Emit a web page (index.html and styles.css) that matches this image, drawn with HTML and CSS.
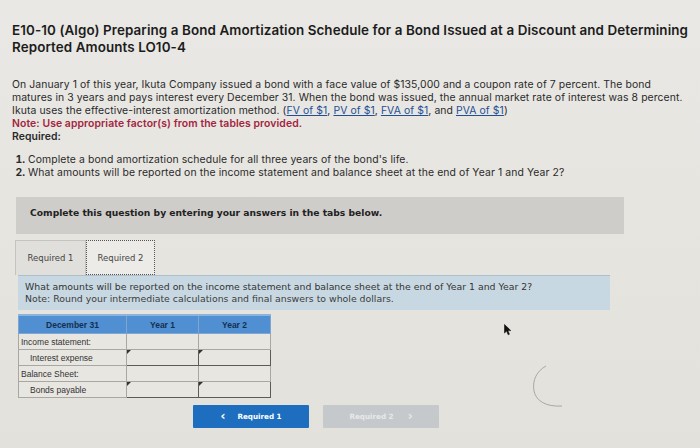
FILE: index.html
```html
<!DOCTYPE html>
<html>
<head>
<meta charset="utf-8">
<link rel="stylesheet" href="styles.css">
</head>
<body>
<div class="page">
  <h1 class="title">E10-10 (Algo) Preparing a Bond Amortization Schedule for a Bond Issued at a Discount and Determining<br>Reported Amounts LO10-4</h1>
  <p class="intro">On January 1 of this year, Ikuta Company issued a bond with a face value of $135,000 and a coupon rate of 7 percent. The bond<br>matures in 3 years and pays interest every December 31. When the bond was issued, the annual market rate of interest was 8 percent.<br>Ikuta uses the effective-interest amortization method. (<a>FV of $1</a>, <a>PV of $1</a>, <a>FVA of $1</a>, and <a>PVA of $1</a>)<br><span class="note">Note: Use appropriate factor(s) from the tables provided.</span><br><span class="req">Required:</span></p>
  <ol class="list">
    <li>Complete a bond amortization schedule for all three years of the bond's life.</li>
    <li>What amounts will be reported on the income statement and balance sheet at the end of Year 1 and Year 2?</li>
  </ol>
  <div class="banner">Complete this question by entering your answers in the tabs below.</div>
  <div class="tabs">
    <div class="tab">Required 1</div>
    <div class="tab active">Required 2</div>
  </div>
  <div class="panel">What amounts will be reported on the income statement and balance sheet at the end of Year 1 and Year 2?<br><span>Note: Round your intermediate calculations and final answers to whole dollars.</span></div>
  <table class="grid">
    <tr><th>December 31</th><th>Year 1</th><th>Year 2</th></tr>
    <tr><td class="lbl">Income statement:</td><td></td><td></td></tr>
    <tr><td class="lbl ind">Interest expense</td><td class="inp"></td><td class="inp"></td></tr>
    <tr><td class="lbl">Balance Sheet:</td><td></td><td></td></tr>
    <tr><td class="lbl ind">Bonds payable</td><td class="inp"></td><td class="inp"></td></tr>
  </table>
  <div class="navs">
    <div class="btn prev"><span class="chev">&lsaquo;</span>Required 1</div>
    <div class="btn next">Required 2<span class="chev r">&rsaquo;</span></div>
  </div>
  <svg class="cursor" width="8" height="12" viewBox="0 0 8 12"><path d="M0.5 0.5 L0.5 9 L2.6 7 L4.2 10.8 L5.4 10.2 L3.9 6.6 L6.8 6.6 Z" fill="#111" stroke="#111" stroke-width="0.6"/></svg>
  <svg class="scribble" width="40" height="46" viewBox="0 0 40 46"><path d="M16 2 C 7 7, 2 16, 4 27 C 6 37, 16 43, 32 42" fill="none" stroke="#9a9894" stroke-width="0.8"/></svg>
</div>
</body>
</html>
```
FILE: styles.css
```css
html, body { margin: 0; padding: 0; }
body {
  width: 700px; height: 448px; overflow: hidden;
  background: linear-gradient(180deg, #e9e8e4 0%, #e6e4df 60%, #e3e1dc 100%);
}
.page { position: relative; padding: 22px 0 0 12px; height: 448px; box-sizing: border-box; }
.title {
  margin: 0; font-family: Inter, sans-serif; font-weight: 600;
  font-size: 13.4px; line-height: 17px; color: #1c1c1c; letter-spacing: 0.1px;
}
.intro {
  margin: 22px 0 0 0; font-family: Inter, sans-serif; font-size: 10.4px;
  line-height: 13px; color: #2a2a2a; letter-spacing: 0.09px;
}
.intro a { color: #1f4f96; text-decoration: underline; }
.note { color: #a3253e; font-weight: 600; }
.req { font-weight: 600; color: #2a2a2a; }
.list {
  margin: 10px 0 0 0; padding-left: 16px; font-family: Inter, sans-serif;
  font-size: 10.4px; line-height: 13px; color: #2a2a2a; letter-spacing: 0.1px;
}
.list li::marker { font-weight: 700; }
.banner {
  margin: 18px 0 0 4px; width: 608px; height: 37px; box-sizing: border-box;
  background: #cfcdca; padding: 10px 0 0 14px;
  font-family: "DejaVu Sans", sans-serif; font-weight: 700; font-size: 9.2px; color: #222;
}
.tabs { display: flex; margin: 6px 0 0 3px; height: 35px; }
.tab {
  width: 71px; box-sizing: border-box; border: 1px solid #c4c3bf; border-bottom: none;
  background: #e0dfdb; font-family: "DejaVu Sans", sans-serif; font-size: 8.5px;
  color: #444; display: flex; align-items: center; justify-content: center;
}
.tab.active {
  width: 69px; background: #ecebe7; border: 1px dotted #555;
}
.panel {
  margin: 0 0 0 6px; width: 592px; height: 35px; box-sizing: border-box;
  background: #c8d8e2; border-top: 1px solid #aebfcb; padding: 5px 0 0 7px;
  font-family: "DejaVu Sans", sans-serif; font-size: 9.36px; line-height: 12px; color: #333;
}
.panel span { color: #3c3c3c; }
.grid {
  margin: 4px 0 0 6px; border-collapse: collapse; font-family: "Liberation Sans", Arial, sans-serif;
  font-size: 8.5px; color: #333;
}
.grid th {
  background: #4f8fd2; color: #15304f; font-weight: 700; height: 17px; padding: 0;
  border: 1px solid #7ea6cf; border-top: 2px solid #8ab3de;
}
.grid th:nth-child(1) { width: 107px; }
.grid th:nth-child(2) { width: 71px; }
.grid th:nth-child(3) { width: 71px; }
.grid td { height: 15px; border: 1px solid #a8a7a3; padding: 0; background: #e8e6e1; }
.grid td.lbl { padding-left: 2px; }
.grid td.ind { padding-left: 11px; }
.grid td.inp { border: 1.6px solid #5c5b58; position: relative; }
.grid td.inp::before {
  content: ""; position: absolute; left: 0; top: 0;
  border-left: 4px solid #333; border-bottom: 4px solid transparent;
}
.navs { display: flex; gap: 14px; margin: 7px 0 0 181px; }
.btn {
  width: 116px; height: 23px; display: flex; align-items: center; justify-content: center;
  font-family: "DejaVu Sans", sans-serif; font-weight: 700; font-size: 7.2px; border-radius: 1px;
}
.btn.prev { background: #1e6ec0; color: #fff; }
.btn.next { background: #c6c9cc; color: #e6e8ea; }
.chev { font-size: 12px; margin-right: 12px; margin-top: -2px; }
.chev.r { margin: -2px 0 0 14px; }
.cursor { position: absolute; left: 504px; top: 324px; }
.scribble { position: absolute; left: 530px; top: 364px; }
```
